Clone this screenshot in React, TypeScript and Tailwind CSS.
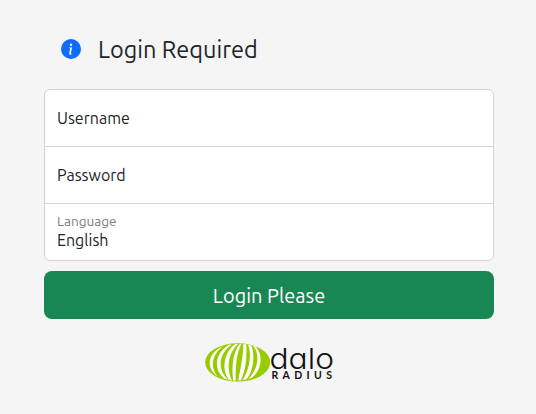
import React from 'react';
import { BsInfoCircleFill } from 'react-icons/bs';

const Logo = () => (
  <svg width="130" height="40" viewBox="0 0 130 40" role="img" aria-label="daloRADIUS">
    <ellipse cx="32.7" cy="20.4" rx="32.5" ry="19.2" fill="#99cc00" />
    <g fill="#ffffff">
      <path d="M18.5 4C1.5 11 1 27 13 34.5C5.5 27 5.5 13 18.5 4Z" />
      <path d="M24 2.7C8.9 12 8.4 28 20 37L22.5 37.4C13 28 12.5 12 27 2.5Z" />
      <path d="M30 2C17.5 12 17 29 24 38L27 38.4C21.8 28 22 12 33 2Z" />
      <path d="M34.5 2.2C27 11 26.8 28 28.2 38.4L30.8 38.4C30.3 28 31 12 36.3 2Z" />
      <path d="M38.3 2.2C38.5 12 35 29 33.2 38.4L35.8 38.2C41 29 42 12 41.3 2.2Z" />
      <path d="M43 2.7C47.3 12 44 29 37.6 38L41.2 37.4C49 29 50 12 46.3 3.2Z" />
      <path d="M48 3.7C56 13 52.5 28 43.3 37L46.7 35.8C57 28 58.6 12 50.3 4.2Z" />
    </g>
    <text
      x="64.5"
      y="26.8"
      fill="#111111"
      textLength="64.5"
      lengthAdjust="spacingAndGlyphs"
      className="font-['Inter',sans-serif] text-[28px] font-[350] [font-feature-settings:'cv11']"
    >
      dalo
    </text>
    <text
      x="66.5"
      y="37"
      fill="#111111"
      textLength="63.5"
      lengthAdjust="spacing"
      className="font-['Lato',sans-serif] text-[10.5px] font-bold tracking-[3px]"
    >
      RADIUS
    </text>
  </svg>
);

export default function App() {
  return (
    <main className="min-h-screen bg-[#f5f5f5] pt-[31px] pl-[44px] font-['Ubuntu','Noto_Sans',sans-serif] text-[#212529]">
      <form className="w-[450px]" onSubmit={(e) => e.preventDefault()}>
        <h1 className="mb-[22px] flex h-9 items-center pl-[17px] text-[23.5px]">
          <BsInfoCircleFill size={20} className="mr-[17px] text-[#0d6efd]" />
          <span className="relative top-px">Login Required</span>
        </h1>

        <div className="divide-y divide-[#ced4da] rounded-md border border-[#ced4da] bg-white">
          <div className="flex h-[57px] items-center px-3 text-[16px]">Username</div>
          <div className="flex h-[57px] items-center px-3 text-[16px]">Password</div>
          <div className="flex h-14 flex-col items-start px-3 pt-[8px]">
            <span className="text-[13.6px] leading-[19px] text-[#7a7d80]">Language</span>
            <span className="text-[16px] leading-[19px]">English</span>
          </div>
        </div>

        <button
          type="submit"
          className="mt-[10px] flex h-12 w-full items-center justify-center rounded-lg bg-[#198754] pt-px text-[20px] text-white"
        >
          Login Please
        </button>
      </form>

      <div className="mt-[23px] w-[450px] pl-[161px]">
        <Logo />
      </div>
    </main>
  );
}
